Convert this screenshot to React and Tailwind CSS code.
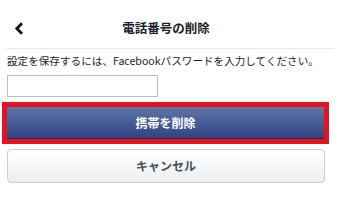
import React from "react";

export default function App() {
  const jp = { fontFamily: '"Noto Sans CJK JP", "Liberation Sans", sans-serif' };

  return (
    <div className="w-[340px] h-[206px] bg-white overflow-hidden" style={jp}>
      {/* HEADER */}
      <div className="relative h-[48px] pt-[8px] flex items-center justify-center">
        <svg
          className="absolute left-[14px] top-[22px]"
          width="10"
          height="13"
          viewBox="0 0 10 13"
        >
          <path d="M8 1.2 L2.8 6.5 L8 11.8" fill="none" stroke="#111" strokeWidth="2.8" />
        </svg>
        <h1 className="text-[12.5px] font-bold text-[#1d2129] ml-[-8px]">電話番号の削除</h1>
      </div>
      <div className="mx-[6px] border-t border-[#e9eaed]" />

      {/* BODY */}
      <div className="px-[7px]">
        <p className="text-[10.6px] leading-[14px] text-[#1d2129] mt-[5px] whitespace-nowrap">
          設定を保存するには、Facebookパスワードを入力してください。
        </p>
        <input
          type="password"
          className="block mt-[7px] w-[151px] h-[22px] border border-[#bdbdbd] outline-none"
        />
      </div>

      <div className="ml-[2px] mt-[5px] w-[327px] border-[5px] border-[#e3131f]">
        <button className="w-full h-[32px] flex items-center justify-center text-white text-[12px] font-bold bg-gradient-to-b from-[#6275a9] to-[#2f4483] border-b border-[#1e2d5c]">
          携帯を削除
        </button>
      </div>

      <div className="px-[7px] mt-[5px]">
        <button className="w-[318px] h-[34px] flex items-center justify-center text-[12px] font-bold text-[#4b4f56] rounded-[4px] border border-[#cdced2] bg-gradient-to-b from-white to-[#eceef1]">
          キャンセル
        </button>
      </div>
    </div>
  );
}
